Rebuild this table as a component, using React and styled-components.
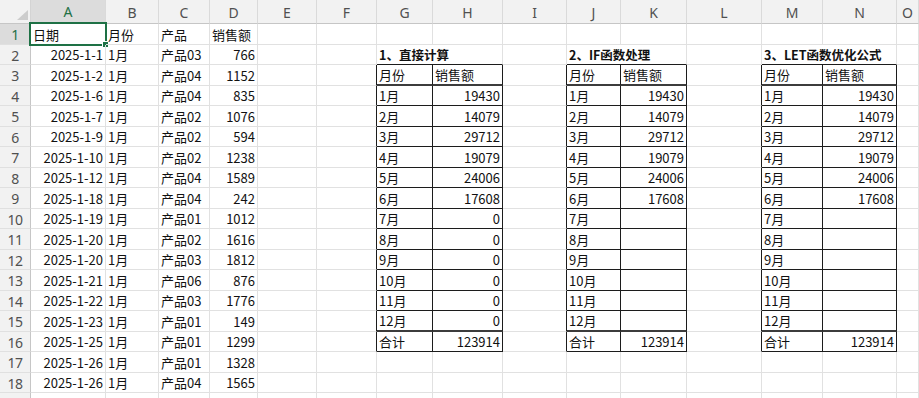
import React from 'react';
import styled, { createGlobalStyle } from 'styled-components';

const Global = createGlobalStyle`
  html, body { margin: 0; padding: 0; background: #fff; overflow: hidden; }
  body {
    width: 919px; height: 398px;
    font-family: "Noto Sans CJK SC", "Noto Sans", sans-serif;
  }
`;

const LETTERS = ['A','B','C','D','E','F','G','H','I','J','K','L','M','N','O'];
const WIDTHS = [75, 53, 51, 48, 59, 60, 56, 70, 64, 54, 66, 75, 61, 74];
const ROWS = 19;

const Sheet = styled.div`
  display: grid;
  grid-template-columns: 31px ${WIDTHS.map((w) => `${w}px`).join(' ')} 1fr;
  grid-template-rows: 24px repeat(9, 21px 20px) 21px;
  width: 919px;
  height: 398px;
  overflow: hidden;
  background: #fff;
`;

const Corner = styled.div`
  display: flex;
  align-items: flex-end;
  justify-content: flex-end;
  padding: 0 2px 3px 0;
  background: #f2f2f2;
  border-right: 1px solid #d4d4d4;
  border-bottom: 1px solid #c6c6c6;
`;

const ColHeader = styled.div`
  display: flex;
  align-items: center;
  justify-content: center;
  padding-top: 1px;
  font-family: "Noto Sans", sans-serif;
  font-size: 14px;
  color: ${(p) => (p.$active ? '#1e7145' : '#505050')};
  background: ${(p) => (p.$active ? '#dcdcdc' : '#f2f2f2')};
  border-right: 1px solid #dadada;
  border-bottom: ${(p) => (p.$active ? '2px solid #1e7145' : '1px solid #c6c6c6')};
`;

const RowHeader = styled.div`
  display: flex;
  align-items: center;
  justify-content: center;
  padding-top: 1px;
  font-family: "Noto Sans", sans-serif;
  font-size: 14px;
  letter-spacing: -0.6px;
  color: ${(p) => (p.$active ? '#1e7145' : '#505050')};
  background: ${(p) => (p.$active ? '#dcdcdc' : '#f2f2f2')};
  border-right: 1px solid #c6c6c6;
  border-bottom: 1px solid #e0e0e0;
`;

const borderColor = { grid: '#e1e1e1', line: '#1c1c1c', thick: '#3c3c3c' };

const Cell = styled.div`
  position: relative;
  grid-column: span ${(p) => p.$span || 1};
  display: flex;
  align-items: center;
  justify-content: ${(p) => (p.$align === 'right' ? 'flex-end' : 'flex-start')};
  padding: 1px 2px 0 2px;
  min-width: 0;
  border-right: 1px solid ${(p) => borderColor[p.$right]};
  border-bottom: ${(p) => (p.$bottom === 'thick' ? 2 : 1)}px solid ${(p) => borderColor[p.$bottom]};
  font-size: ${(p) => (p.$bold ? '12.5px' : '13px')};
  line-height: 16px;
  color: #111;
  font-weight: ${(p) => (p.$bold ? 700 : 400)};
  white-space: nowrap;
`;

const Selection = styled.div`
  position: absolute;
  top: -2px;
  left: -2px;
  right: -2px;
  bottom: -2px;
  border: 2px solid #1e7145;
  pointer-events: none;
`;

const FillHandle = styled.div`
  position: absolute;
  right: -4px;
  bottom: -4px;
  width: 5px;
  height: 5px;
  background: #1e7145;
  border: 1px solid #fff;
`;

const sales = [
  ['2025-1-1', '1月', '产品03', 766],
  ['2025-1-2', '1月', '产品04', 1152],
  ['2025-1-6', '1月', '产品04', 835],
  ['2025-1-7', '1月', '产品02', 1076],
  ['2025-1-9', '1月', '产品02', 594],
  ['2025-1-10', '1月', '产品02', 1238],
  ['2025-1-12', '1月', '产品04', 1589],
  ['2025-1-18', '1月', '产品04', 242],
  ['2025-1-19', '1月', '产品01', 1012],
  ['2025-1-20', '1月', '产品02', 1616],
  ['2025-1-20', '1月', '产品03', 1812],
  ['2025-1-21', '1月', '产品06', 876],
  ['2025-1-22', '1月', '产品03', 1776],
  ['2025-1-23', '1月', '产品01', 149],
  ['2025-1-25', '1月', '产品01', 1299],
  ['2025-1-26', '1月', '产品01', 1328],
  ['2025-1-26', '1月', '产品04', 1565],
  ['', '1月', '产品', ''],
];

const monthly = [19430, 14079, 29712, 19079, 24006, 17608];

const tables = [
  { col: 7, title: '1、直接计算', values: [...monthly, 0, 0, 0, 0, 0, 0] },
  { col: 10, title: '2、IF函数处理', values: [...monthly, '', '', '', '', '', ''] },
  { col: 13, title: '3、LET函数优化公式', values: [...monthly, '', '', '', '', '', ''] },
];

const tableCols = tables.flatMap((t) => [t.col, t.col + 1]);

function buildCells() {
  const cells = {};
  const put = (r, c, v, align = 'left', extra = {}) => {
    cells[`${r}-${c}`] = { v, align, ...extra };
  };
  ['日期', '月份', '产品', '销售额'].forEach((h, i) => put(1, i + 1, h));
  sales.forEach(([d, m, p, n], i) => {
    const r = i + 2;
    put(r, 1, d, 'right');
    put(r, 2, m);
    put(r, 3, p);
    put(r, 4, n, 'right');
  });
  tables.forEach((t) => {
    put(2, t.col, t.title, 'left', { bold: true, span: 2 });
    put(3, t.col, '月份');
    put(3, t.col + 1, '销售额');
    t.values.forEach((v, i) => {
      put(4 + i, t.col, `${i + 1}月`);
      put(4 + i, t.col + 1, v, 'right');
    });
    put(16, t.col, '合计');
    put(16, t.col + 1, 123914, 'right');
  });
  return cells;
}

const CELLS = buildCells();

const rightKind = (r, c) => (r >= 3 && r <= 16 && c >= 6 && c <= 14 ? 'line' : 'grid');
const bottomKind = (r, c) => {
  if (tableCols.includes(c) && r >= 2 && r <= 16) return r === 3 || r === 15 ? 'thick' : 'line';
  return 'grid';
};

function CornerMark() {
  return (
    <svg width="11" height="10" viewBox="0 0 11 10">
      <polygon points="11,0 11,10 0,10" fill="#cdcdcd" />
    </svg>
  );
}

export default function App() {
  const rows = [];
  for (let r = 1; r <= ROWS; r += 1) {
    rows.push(
      <RowHeader key={`rh-${r}`} $active={r === 1}>
        {r < ROWS ? r : ''}
      </RowHeader>
    );
    let c = 1;
    while (c <= 15) {
      const cell = CELLS[`${r}-${c}`];
      const span = cell?.span || 1;
      const last = c + span - 1;
      rows.push(
        <Cell
          key={`${r}-${c}`}
          $span={span}
          $align={cell?.align}
          $bold={cell?.bold}
          $right={rightKind(r, last)}
          $bottom={bottomKind(r, c)}
        >
          {cell ? cell.v : ''}
          {r === 1 && c === 1 && (
            <Selection>
              <FillHandle />
            </Selection>
          )}
        </Cell>
      );
      c += span;
    }
  }

  return (
    <>
      <Global />
      <Sheet>
        <Corner>
          <CornerMark />
        </Corner>
        {LETTERS.map((l, i) => (
          <ColHeader key={l} $active={i === 0}>
            {l}
          </ColHeader>
        ))}
        {rows}
      </Sheet>
    </>
  );
}
